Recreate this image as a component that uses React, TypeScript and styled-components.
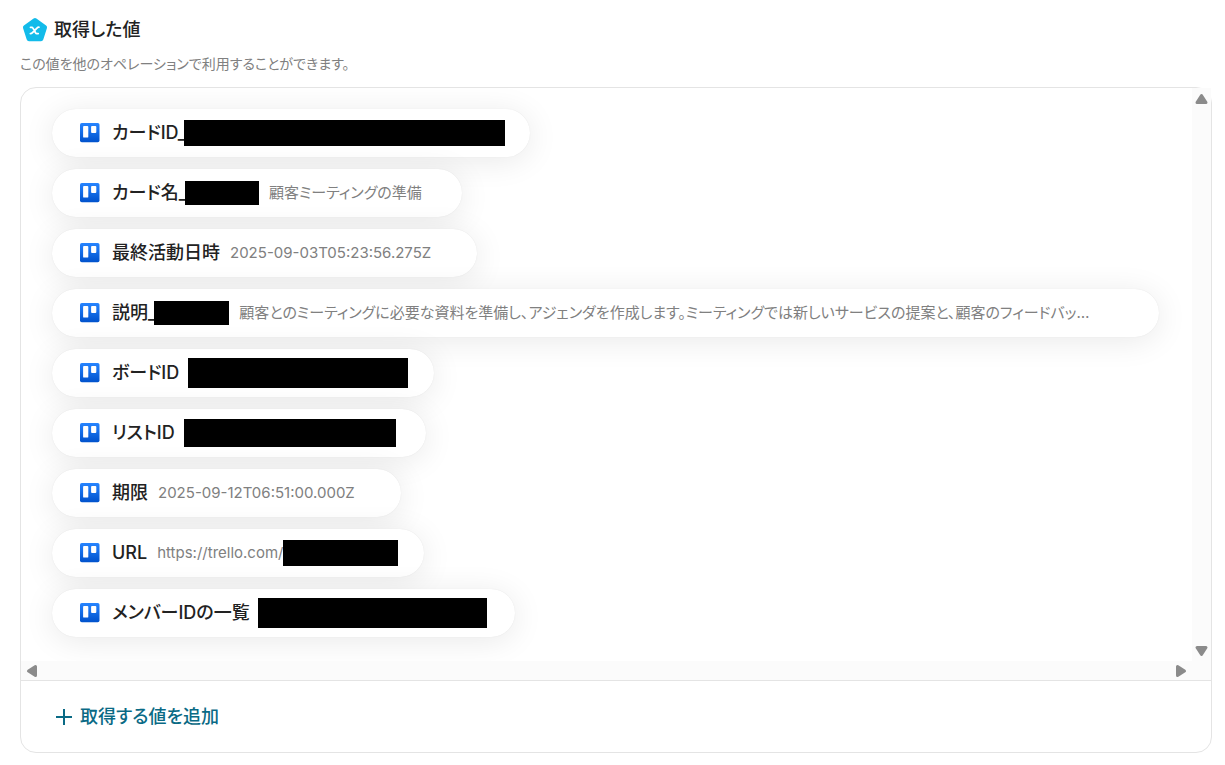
import React from "react";
import styled, { createGlobalStyle } from "styled-components";

const GlobalStyle = createGlobalStyle`
  * { box-sizing: border-box; }
  body {
    margin: 0;
    background: #fff;
    color: #222;
    font-family: Inter, "Noto Sans CJK JP", sans-serif;
    font-feature-settings: "palt";
  }
`;

const Page = styled.main`
  padding: 16px 13px 12px 20px;
`;

const Header = styled.header`
  display: flex;
  align-items: center;
  gap: 6px;
  height: 28px;
  padding-left: 2px;
`;

const Title = styled.h1`
  margin: 0;
  font-size: 18px;
  line-height: 28px;
  font-weight: 500;
`;

const Lead = styled.p`
  margin: 9px 0 13px;
  font-size: 14px;
  line-height: 21px;
  color: #808080;
`;

const Panel = styled.section`
  border: 1px solid #e4e4e4;
  border-radius: 16px;
`;

const ScrollArea = styled.div`
  display: grid;
  grid-template-columns: minmax(0, 1fr) 19px;
  grid-template-rows: auto 19px;
  border-bottom: 1px solid #e4e4e4;
`;

const List = styled.ul`
  display: flex;
  flex-direction: column;
  align-items: flex-start;
  gap: 12px;
  margin: 0;
  padding: 21px 31px 24px;
  overflow: hidden;
  list-style: none;
`;

const Pill = styled.li<{ $end: number }>`
  display: flex;
  align-items: center;
  max-width: 100%;
  height: 48px;
  padding: 0 ${(p) => p.$end}px 0 28px;
  border-radius: 24px;
  background: #fff;
  box-shadow: 0 0 1px rgba(0, 0, 0, 0.1), 0 4px 32px rgba(0, 0, 0, 0.09);
  white-space: nowrap;
`;

const Label = styled.span`
  margin-left: 12px;
  font-size: 18px;
  line-height: 24px;
  font-weight: 500;
`;

const Value = styled.span`
  margin-left: 10px;
  overflow: hidden;
  text-overflow: ellipsis;
  font-size: 15px;
  line-height: 24px;
  color: #808080;
`;

const Mask = styled.span<{ $width: number; $height: number; $gap?: number }>`
  flex: none;
  width: ${(p) => p.$width}px;
  height: ${(p) => p.$height}px;
  margin-left: ${(p) => p.$gap ?? 0}px;
  background: #000;
`;

const Track = styled.div<{ $horizontal?: boolean }>`
  display: flex;
  flex-direction: ${(p) => (p.$horizontal ? "row" : "column")};
  align-items: center;
  justify-content: space-between;
  padding: ${(p) => (p.$horizontal ? "0 5px" : "5px 0 4px")};
  background: #fbfbfb;
`;

const Corner = styled.div`
  background: #fbfbfb;
`;

const ArrowButton = styled.button`
  display: flex;
  padding: 0;
  border: 0;
  background: none;
  color: #8b8b8b;
`;

const Footer = styled.footer`
  padding: 20px 34px 19px;
`;

const AddButton = styled.button`
  display: flex;
  align-items: center;
  gap: 7px;
  height: 32px;
  padding: 0;
  border: 0;
  background: none;
  color: #0a6a85;
  font: inherit;
  font-feature-settings: inherit;
  font-size: 18px;
  line-height: 24px;
  font-weight: 500;
`;

const BoardSvg = styled.svg`
  flex: none;
`;

const PentagonIcon = () => (
  <svg width="26" height="26" viewBox="0 0 26 26" aria-hidden="true">
    <path
      d="M11.6 1.5a2.4 2.4 0 0 1 2.8 0l9.7 7a2.3 2.3 0 0 1 .8 2.7l-3.6 11.4a2.4 2.4 0 0 1-2.3 1.7H7a2.4 2.4 0 0 1-2.3-1.7L1.1 11.2a2.3 2.3 0 0 1 .8-2.700z"
      fill="#12bbea"
    />
    <path
      d="M8.500 10.300h1.300c.6 0 .9.2 1.200.8l2.600 4.700c.3.600.6.800 1.200.8h1.400M16.900 10.200c-.9 0-1.500.4-2.200 1.100l-4.200 4.300c-.7.700-1.200 1-2.100 1"
      fill="none"
      stroke="#fff"
      strokeWidth="1.800"
      strokeLinecap="round"
    />
  </svg>
);

const TrelloIcon = () => (
  <BoardSvg width="20" height="20" viewBox="0 0 20 20" aria-hidden="true">
    <defs>
      <linearGradient id="board" x1="0" y1="0" x2="0" y2="1">
        <stop offset="0" stopColor="#2684ff" />
        <stop offset="1" stopColor="#0052cc" />
      </linearGradient>
    </defs>
    <rect y="0" width="19.500" height="19.300" rx="1.800" fill="url(#board)" />
    <rect x="3.100" y="3" width="5.200" height="11.600" rx="0.900" fill="#fff" />
    <rect x="11.100" y="3" width="5.200" height="7" rx="0.900" fill="#fff" />
  </BoardSvg>
);

const PlusIcon = () => (
  <svg width="18" height="18" viewBox="0 0 18 18" aria-hidden="true">
    <path d="M9 1v16M1 9h16" stroke="currentColor" strokeWidth="2" />
  </svg>
);

const arrows = {
  up: { w: 14, h: 12, d: "M6.500 2.500 11 9.500H2z" },
  down: { w: 14, h: 12, d: "M6.500 9.500 11 2.500H2z" },
  left: { w: 12, h: 14, d: "M2.500 7 9.500 2.500V11.500z" },
  right: { w: 12, h: 14, d: "M9.500 7 2.500 2.500V11.500z" },
};

const Arrow = ({ dir, label }: { dir: keyof typeof arrows; label: string }) => {
  const { w, h, d } = arrows[dir];
  return (
    <ArrowButton type="button" aria-label={label}>
      <svg width={w} height={h} viewBox={`0 0 ${w} ${h}`} aria-hidden="true">
        <path d={d} fill="currentColor" stroke="currentColor" strokeWidth="3" strokeLinejoin="round" />
      </svg>
    </ArrowButton>
  );
};

type MaskSize = { width: number; height: number; gap?: number };
type Item = {
  label: string;
  labelMask?: MaskSize;
  value?: string;
  valueMask?: MaskSize;
  end: number;
};

const items: Item[] = [
  { label: "カードID_", labelMask: { width: 321, height: 26, gap: -2 }, end: 25 },
  { label: "カード名_", labelMask: { width: 74, height: 24, gap: -2 }, value: "顧客ミーティングの準備", end: 40 },
  { label: "最終活動日時", value: "2025-09-03T05:23:56.275Z", end: 46 },
  {
    label: "説明_",
    labelMask: { width: 75, height: 24, gap: -2 },
    value:
      "顧客とのミーティングに必要な資料を準備し、アジェンダを作成します。ミーティングでは新しいサービスの提案と、顧客のフィードバッ…",
    end: 70,
  },
  { label: "ボードID", valueMask: { width: 220, height: 30, gap: 9 }, end: 26 },
  { label: "リストID", valueMask: { width: 212, height: 28, gap: 9 }, end: 30 },
  { label: "期限", value: "2025-09-12T06:51:00.000Z", end: 46 },
  { label: "URL", value: "https://trello.com/", valueMask: { width: 115, height: 26 }, end: 26 },
  { label: "メンバーIDの一覧", valueMask: { width: 229, height: 30, gap: 8 }, end: 28 },
];

const MaskBar = ({ size }: { size?: MaskSize }) =>
  size ? <Mask $width={size.width} $height={size.height} $gap={size.gap} /> : null;

export default function App() {
  return (
    <>
      <GlobalStyle />
      <Page>
        <Header>
          <PentagonIcon />
          <Title>取得した値</Title>
        </Header>
        <Lead>この値を他のオペレーションで利用することができます。</Lead>
        <Panel>
          <ScrollArea>
            <List>
              {items.map((item) => (
                <Pill key={item.label} $end={item.end}>
                  <TrelloIcon />
                  <Label>{item.label}</Label>
                  <MaskBar size={item.labelMask} />
                  {item.value && <Value>{item.value}</Value>}
                  <MaskBar size={item.valueMask} />
                </Pill>
              ))}
            </List>
            <Track>
              <Arrow dir="up" label="上へスクロール" />
              <Arrow dir="down" label="下へスクロール" />
            </Track>
            <Track $horizontal>
              <Arrow dir="left" label="左へスクロール" />
              <Arrow dir="right" label="右へスクロール" />
            </Track>
            <Corner />
          </ScrollArea>
          <Footer>
            <AddButton type="button">
              <PlusIcon />
              取得する値を追加
            </AddButton>
          </Footer>
        </Panel>
      </Page>
    </>
  );
}
